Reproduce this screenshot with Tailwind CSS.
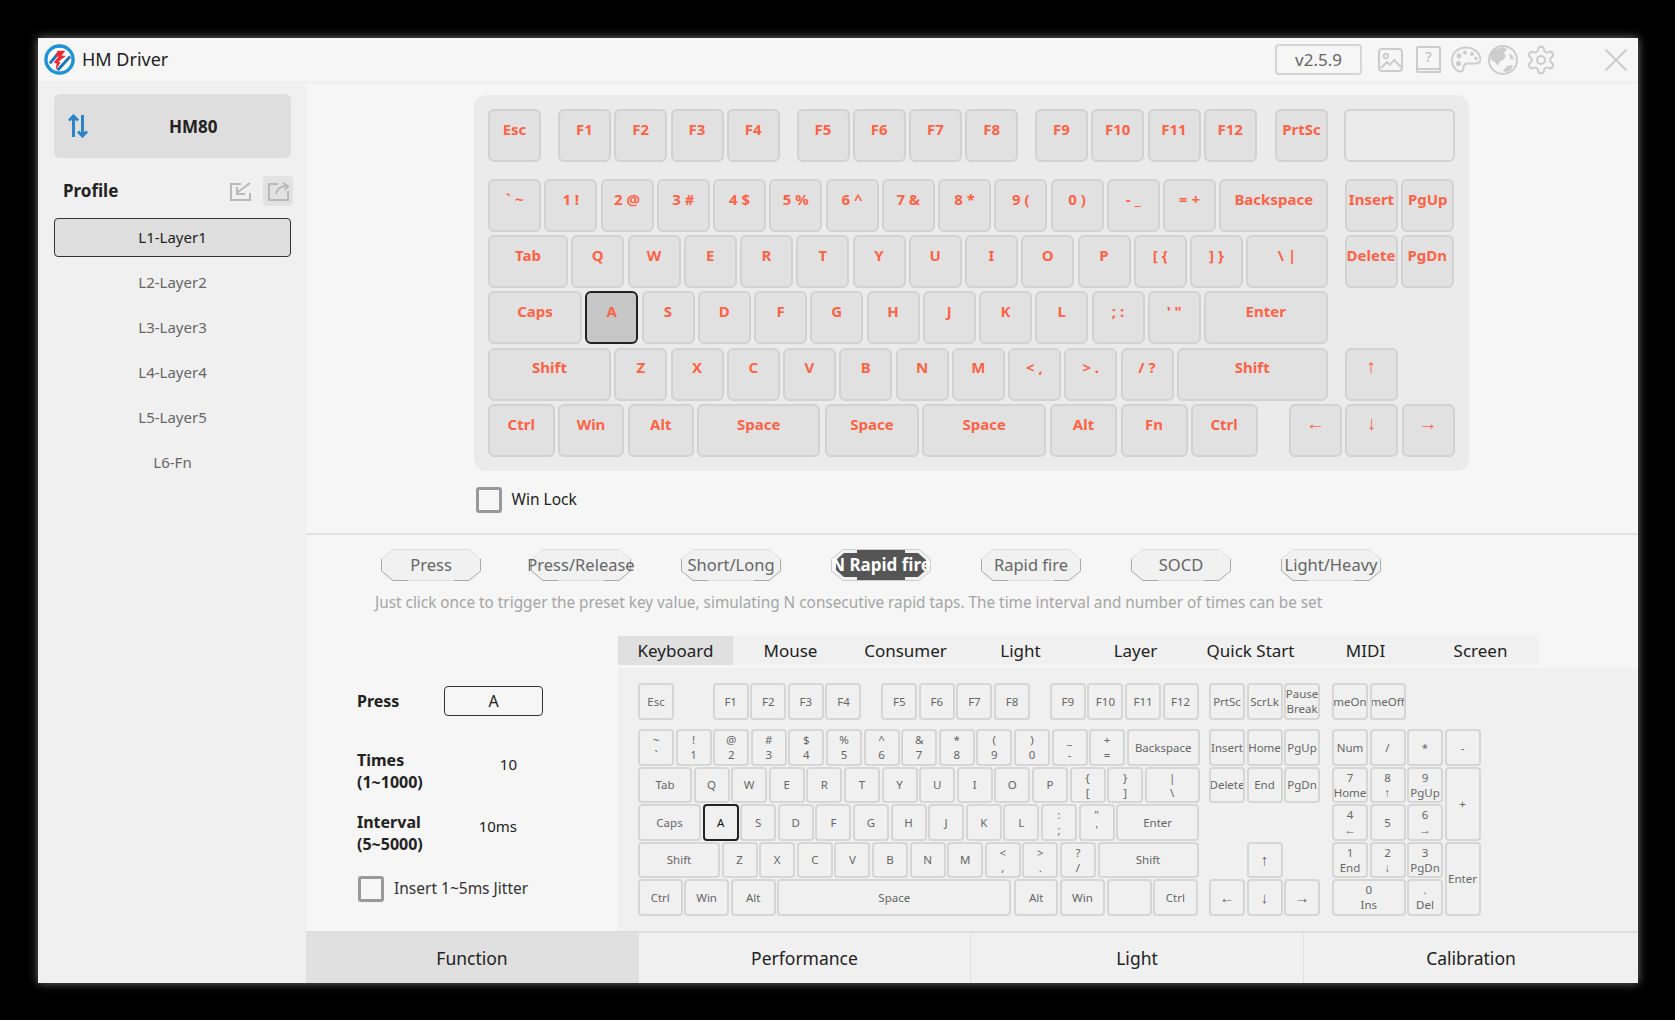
<!DOCTYPE html>
<html lang="en">
<head>
<meta charset="UTF-8" />
<title>HM Driver</title>
<script src="https://cdn.jsdelivr.net/npm/@tailwindcss/browser@4"></script>
</head>
<body class="bg-black font-['Noto_Sans',sans-serif] text-[#222] overflow-hidden">

<div class="h-[1020px] pl-[38px] pt-[38px]">
  <div class="w-[1600px] h-[945px] flex flex-col bg-[#f6f6f6] shadow-[0_0_9px_rgba(255,255,255,0.45)]">

    <!-- Title bar -->
    <div class="h-[46px] shrink-0 flex items-center border-b-[3px] border-[#f0f0f0] pr-[11px]">
      <svg class="ml-[6px] w-[31px] h-[31px]" viewBox="0 0 32 32" fill="none">
        <circle cx="16" cy="16" r="14" fill="#fff" stroke="#1b93d6" stroke-width="3.5"/>
        <path d="M6 20 L16 8 M14 27 L27 13" stroke="#1b75bb" stroke-width="3"/>
        <path d="M14 7h8l-4 5h5l-8 6 2 1-5 8 1-7-3-1 5-6h-3z" fill="#ee2b2f"/>
      </svg>
      <span class="ml-[7px] text-[18px]">HM Driver</span>
      <div class="ml-auto w-[87px] h-[31px] flex items-center justify-center rounded-[4px] border-2 border-[#d6d6d6] text-[17px] text-[#666]">v2.5.9</div>
      <svg class="ml-[16px] w-[25px] h-[24px]" viewBox="0 0 25 24" fill="none" stroke="#ccc" stroke-width="2">
        <rect x="1" y="1" width="23" height="22" rx="3"/><circle cx="8" cy="8" r="2.2"/><path d="M3 20l6-6 3 3 4-5 7 7"/>
      </svg>
      <svg class="ml-[13px] w-[25px] h-[27px]" viewBox="0 0 25 27" fill="none" stroke="#ccc" stroke-width="2">
        <path d="M1 23V2a1 1 0 0 1 1-1h21a1 1 0 0 1 1 1v24H2a1 1 0 0 1-1-1v-2h23"/>
        <text x="12.5" y="16" text-anchor="middle" font-size="15" fill="#bbb" stroke="none" font-family="Noto Sans">?</text>
      </svg>
      <svg class="ml-[10px] w-[30px] h-[27px]" viewBox="0 0 30 27" fill="none" stroke="#ccc" stroke-width="2">
        <path d="M15 1.500C7 1.500 1 7 1 14c0 6 4 11.500 8.500 11.500 3 0 3-2 3-4.500s2-3.500 4.500-3.500c4 0 12.500 1 12.500-3.500C29.500 7 23 1.500 15 1.500z"/>
        <g fill="#ccc" stroke="none"><circle cx="8" cy="10" r="2.400"/><circle cx="14" cy="6.500" r="2"/><circle cx="21" cy="8" r="2"/><circle cx="25" cy="12.500" r="1.800"/><circle cx="7.500" cy="17.500" r="2.600"/></g>
      </svg>
      <svg class="ml-[7px] w-[30px] h-[30px]" viewBox="0 0 30 30" fill="none" stroke="#ccc" stroke-width="2">
        <circle cx="15" cy="15" r="14"/>
        <path fill="#ccc" stroke="none" d="M6 5l9-3 4 2-3 4 2 3-3 4-3 1-2 5-3-4-4-2-1-6zM19 21l6-1-2 5-5 2-3-1zM21 9l3 1 2 4-3 1z"/>
      </svg>
      <svg class="ml-[7px] w-[32px] h-[32px]" viewBox="0 0 24 24" fill="none" stroke="#ccc" stroke-width="1.500">
        <path d="M12.220 2h-.44a2 2 0 0 0-2 2v.18a2 2 0 0 1-1 1.730l-.43.25a2 2 0 0 1-2 0l-.15-.08a2 2 0 0 0-2.730.73l-.22.38a2 2 0 0 0 .73 2.730l.15.1a2 2 0 0 1 1 1.720v.51a2 2 0 0 1-1 1.740l-.15.09a2 2 0 0 0-.73 2.730l.22.38a2 2 0 0 0 2.730.73l.15-.08a2 2 0 0 1 2 0l.43.25a2 2 0 0 1 1 1.730V20a2 2 0 0 0 2 2h.44a2 2 0 0 0 2-2v-.18a2 2 0 0 1 1-1.730l.43-.25a2 2 0 0 1 2 0l.15.08a2 2 0 0 0 2.730-.73l.22-.39a2 2 0 0 0-.73-2.730l-.15-.08a2 2 0 0 1-1-1.740v-.5a2 2 0 0 1 1-1.740l.15-.09a2 2 0 0 0 .73-2.730l-.22-.38a2 2 0 0 0-2.730-.73l-.15.08a2 2 0 0 1-2 0l-.43-.25a2 2 0 0 1-1-1.730V4a2 2 0 0 0-2-2z"/>
        <circle cx="12" cy="12" r="3"/>
      </svg>
      <svg class="ml-[48px] w-[22px] h-[22px]" viewBox="0 0 22 22" fill="none" stroke="#ccc" stroke-width="2"><path d="M0.500 0.500l21 21M21.500 0.500l-21 21"/></svg>
    </div>

    <div class="flex-1 flex min-h-0">
      <!-- Sidebar -->
      <div class="w-[268px] shrink-0 bg-[#f0f0f0] pt-[10px] pl-[16px]">
        <div class="w-[237px] h-[64px] rounded-[6px] bg-[#dedede] flex items-center">
          <svg class="ml-[14px] w-[20px] h-[24px]" viewBox="0 0 20 24" fill="none" stroke="#2d84c4" stroke-width="3"><path d="M5.500 23V2M1 6.500L5.500 2 10 6.500M14.500 1v21M10 17.500l4.500 4.500 4.500-4.500"/></svg>
          <span class="ml-[81px] mt-[2px] text-[17px] font-bold">HM80</span>
        </div>
        <div class="mt-[18px] w-[237px] h-[30px] flex items-center">
          <span class="ml-[9px] text-[17px] font-bold">Profile</span>
          <svg class="ml-auto w-[21px] h-[19px]" viewBox="0 0 21 19" fill="none" stroke="#b9b9b9" stroke-width="2"><path d="M11 2H1v16h19v-7M20 1L8 10M7 5v7h8"/></svg>
          <div class="ml-[12px] mr-[-2px] w-[30px] h-[30px] rounded-[4px] bg-[#e2e2e2] flex items-center justify-center">
            <svg class="w-[21px] h-[19px]" viewBox="0 0 21 19" fill="none" stroke="#b9b9b9" stroke-width="2"><path d="M10 2H1v16h19V9M8 12C9 7 13 4 19 4M15 1l5 3-3 4"/></svg>
          </div>
        </div>
        <div class="mt-[12px] w-[237px] flex flex-col gap-[6px] text-[15px] text-[#666]">
          <div class="h-[39px] flex items-center justify-center rounded-[4px] border-[1.5px] border-[#333] bg-[#dedede] text-[#222]">L1-Layer1</div>
          <div class="h-[39px] flex items-center justify-center">L2-Layer2</div>
          <div class="h-[39px] flex items-center justify-center">L3-Layer3</div>
          <div class="h-[39px] flex items-center justify-center">L4-Layer4</div>
          <div class="h-[39px] flex items-center justify-center">L5-Layer5</div>
          <div class="h-[39px] flex items-center justify-center">L6-Fn</div>
        </div>
      </div>

      <!-- Main -->
      <div class="flex-1 flex flex-col min-w-0">
        <!-- Upper keyboard -->
        <div class="h-[451px] shrink-0 border-b-2 border-[#e2e2e2] pl-[168px] pt-[11px]">
          <div class="w-[995px] h-[376px] rounded-[12px] bg-[#ebebeb] pl-[14px] pt-[14px] flex flex-col gap-[3.25px] text-[15px] font-bold text-[#ff6347] [&_button]:min-w-[53px] [&_button]:h-[53px] [&_button]:shrink-0 [&_button]:pb-[13px] [&_button]:rounded-[6px] [&_button]:border-2 [&_button]:border-[#d2d2d2] [&_button]:bg-[#e1e1e1]">
            <div class="flex gap-[3.25px] mb-[13.5px]">
              <button>Esc</button>
              <button class="ml-[13.75px]">F1</button><button>F2</button><button>F3</button><button>F4</button>
              <button class="ml-[13.5px]">F5</button><button>F6</button><button>F7</button><button>F8</button>
              <button class="ml-[13.5px]">F9</button><button>F10</button><button>F11</button><button>F12</button>
              <button class="ml-[15px]">PrtSc</button>
              <button class="ml-[12.75px] w-[111px] !bg-[#ebebeb]"></button>
            </div>
            <div class="flex gap-[3.25px]">
              <button>` ~</button><button>1 !</button><button>2 @</button><button>3 #</button><button>4 $</button><button>5 %</button><button>6 ^</button><button>7 &amp;</button><button>8 *</button><button>9 (</button><button>0 )</button><button>- _</button><button>= +</button>
              <button class="w-[109px]">Backspace</button>
              <button class="ml-[13.5px]">Insert</button><button>PgUp</button>
            </div>
            <div class="flex gap-[3.25px]">
              <button class="w-[80px]">Tab</button>
              <button>Q</button><button>W</button><button>E</button><button>R</button><button>T</button><button>Y</button><button>U</button><button>I</button><button>O</button><button>P</button><button>[ {</button><button>] }</button>
              <button class="w-[81.500px]">\ |</button>
              <button class="ml-[13.5px]">Delete</button><button>PgDn</button>
            </div>
            <div class="flex gap-[3.25px]">
              <button class="w-[94px]">Caps</button>
              <button class="!bg-[#c6c6c6] !border-[#222]">A</button>
              <button>S</button><button>D</button><button>F</button><button>G</button><button>H</button><button>J</button><button>K</button><button>L</button><button>; :</button><button>' "</button>
              <button class="w-[123.5px]">Enter</button>
            </div>
            <div class="flex gap-[3.25px]">
              <button class="w-[123px]">Shift</button>
              <button>Z</button><button>X</button><button>C</button><button>V</button><button>B</button><button>N</button><button>M</button><button>&lt; ,</button><button>&gt; .</button><button>/ ?</button>
              <button class="w-[151px]">Shift</button>
              <button class="ml-[13.75px] font-['Liberation_Sans'] text-[19px]">↑</button>
            </div>
            <div class="flex gap-[3.25px]">
              <button class="w-[66.5px]">Ctrl</button><button class="w-[66.5px]">Win</button><button class="w-[66.5px]">Alt</button>
              <button class="w-[123px]">Space</button>
              <button class="ml-[1.5px] w-[94px]">Space</button>
              <button class="w-[123.75px]">Space</button>
              <button class="ml-[0.5px] w-[67.5px]">Alt</button><button class="w-[67px]">Fn</button><button class="w-[66.75px]">Ctrl</button>
              <button class="ml-[28.25px] font-['Liberation_Sans'] text-[19px]">←</button><button class="font-['Liberation_Sans'] text-[19px]">↓</button><button class="font-['Liberation_Sans'] text-[19px]">→</button>
            </div>
          </div>
          <label class="mt-[16px] ml-[2px] flex items-center">
            <span class="w-[26px] h-[26px] rounded-[3px] border-[3px] border-[#999]"></span>
            <span class="ml-[9.500px] text-[15.5px]">Win Lock</span>
          </label>
        </div>

        <!-- Mode presets -->
        <div class="shrink-0 pt-[14px] pl-[75px] flex gap-[50px] text-[16.5px] text-[#666]">
          <div class="relative w-[100px] h-[32px] flex items-center justify-center">
            <svg class="absolute inset-0" width="100" height="32" fill="none"><path d="M12 .5H88L99.500 10V22L88 31.500H12L.5 22V10Z" fill="#f1f1f1" stroke="#ddd"/><path d="M27 31.500H12L.5 22V10M73 31.500H88L99.500 22V10" stroke="#aaa"/></svg>
            <span class="relative whitespace-nowrap">Press</span>
          </div>
          <div class="relative w-[100px] h-[32px] flex items-center justify-center">
            <svg class="absolute inset-0" width="100" height="32" fill="none"><path d="M12 .5H88L99.500 10V22L88 31.500H12L.5 22V10Z" fill="#f1f1f1" stroke="#ddd"/><path d="M27 31.500H12L.5 22V10M73 31.500H88L99.500 22V10" stroke="#aaa"/></svg>
            <span class="relative whitespace-nowrap">Press/Release</span>
          </div>
          <div class="relative w-[100px] h-[32px] flex items-center justify-center">
            <svg class="absolute inset-0" width="100" height="32" fill="none"><path d="M12 .5H88L99.500 10V22L88 31.500H12L.5 22V10Z" fill="#f1f1f1" stroke="#ddd"/><path d="M27 31.500H12L.5 22V10M73 31.500H88L99.500 22V10" stroke="#aaa"/></svg>
            <span class="relative whitespace-nowrap">Short/Long</span>
          </div>
          <div class="relative w-[100px] h-[32px] overflow-hidden flex items-center justify-center font-bold text-[17px] text-white">
            <svg class="absolute inset-0" width="100" height="32" fill="none"><path d="M12 .5H88L99.500 10V22L88 31.500H12L.5 22V10Z" fill="#f1f1f1" stroke="#ccc"/><path d="M26 1H74V4H87L95 11V21L87 28H74V31H26V28H13L5 21V11L13 4H26Z" fill="#555"/></svg>
            <span class="relative whitespace-nowrap">N Rapid fire</span>
          </div>
          <div class="relative w-[100px] h-[32px] flex items-center justify-center">
            <svg class="absolute inset-0" width="100" height="32" fill="none"><path d="M12 .5H88L99.500 10V22L88 31.500H12L.5 22V10Z" fill="#f1f1f1" stroke="#ddd"/><path d="M27 31.500H12L.5 22V10M73 31.500H88L99.500 22V10" stroke="#aaa"/></svg>
            <span class="relative whitespace-nowrap">Rapid fire</span>
          </div>
          <div class="relative w-[100px] h-[32px] flex items-center justify-center">
            <svg class="absolute inset-0" width="100" height="32" fill="none"><path d="M12 .5H88L99.500 10V22L88 31.500H12L.5 22V10Z" fill="#f1f1f1" stroke="#ddd"/><path d="M27 31.500H12L.5 22V10M73 31.500H88L99.500 22V10" stroke="#aaa"/></svg>
            <span class="relative whitespace-nowrap">SOCD</span>
          </div>
          <div class="relative w-[100px] h-[32px] flex items-center justify-center">
            <svg class="absolute inset-0" width="100" height="32" fill="none"><path d="M12 .5H88L99.500 10V22L88 31.500H12L.5 22V10Z" fill="#f1f1f1" stroke="#ddd"/><path d="M27 31.500H12L.5 22V10M73 31.500H88L99.500 22V10" stroke="#aaa"/></svg>
            <span class="relative whitespace-nowrap">Light/Heavy</span>
          </div>
        </div>
        <p class="shrink-0 mt-[9px] pl-[69px] h-[24px] leading-[24px] text-[15.33px] text-[#a5a5a5] whitespace-nowrap">Just click once to trigger the preset key value, simulating N consecutive rapid taps. The time interval and number of times can be set</p>

        <!-- Mapping area -->
        <div class="flex-1 min-h-0 mt-[21.5px] flex">
          <!-- Form -->
          <div class="w-[312px] shrink-0 pt-[50px] pl-[51px] text-[#222]">
            <div class="flex items-center h-[30px]">
              <span class="w-[87px] text-[16px] font-bold">Press</span>
              <span class="w-[99px] h-[30px] flex items-center justify-center rounded-[4px] border-[1.5px] border-[#333] text-[16px]">A</span>
            </div>
            <div class="mt-[33px] flex items-start">
              <span class="w-[87px] text-[16px] font-bold leading-[22px] whitespace-nowrap">Times<br>(1~1000)</span>
              <span class="w-[73px] pt-[4px] text-right text-[15px] leading-[22px]">10</span>
            </div>
            <div class="mt-[18px] flex items-start">
              <span class="w-[87px] text-[16px] font-bold leading-[22.5px] whitespace-nowrap">Interval<br>(5~5000)</span>
              <span class="w-[73px] pt-[4px] text-right text-[15px] leading-[22px]">10ms</span>
            </div>
            <label class="mt-[20px] ml-[1px] flex items-center">
              <span class="w-[26px] h-[26px] rounded-[3px] border-[3px] border-[#999]"></span>
              <span class="ml-[10px] pt-[1px] text-[15.5px] text-[#333]">Insert 1~5ms Jitter</span>
            </label>
          </div>

          <!-- Key picker -->
          <div class="flex-1 min-w-0 flex flex-col">
            <div class="w-[920px] h-[29px] shrink-0 bg-[#f0f0f0] flex text-[17px] text-[#222]">
              <div class="w-[115px] pt-[1px] flex items-center justify-center bg-[#e0e0e0]">Keyboard</div>
              <div class="w-[115px] pt-[1px] flex items-center justify-center">Mouse</div>
              <div class="w-[115px] pt-[1px] flex items-center justify-center">Consumer</div>
              <div class="w-[115px] pt-[1px] flex items-center justify-center">Light</div>
              <div class="w-[115px] pt-[1px] flex items-center justify-center">Layer</div>
              <div class="w-[115px] pt-[1px] flex items-center justify-center">Quick Start</div>
              <div class="w-[115px] pt-[1px] flex items-center justify-center">MIDI</div>
              <div class="w-[115px] pt-[1px] flex items-center justify-center">Screen</div>
            </div>
            <div class="flex-1 min-h-0 mt-[3px] bg-[#f0f0f0] pt-[15.5px] pl-[20px] flex text-[11.5px] leading-[15px] text-[#666] [&_button]:min-w-[36px] [&_button]:min-h-[36.5px] [&_button]:shrink-0 [&_button]:rounded-[4px] [&_button]:border-2 [&_button]:border-[#d6d6d6] [&_button]:flex [&_button]:items-center [&_button]:justify-center [&_button]:overflow-hidden [&_button]:whitespace-nowrap">
              <!-- Main block -->
              <div class="w-[562px] shrink-0 flex flex-col gap-[1px]">
                <div class="flex gap-[1.6px] mb-[8.6px]">
                  <button>Esc</button>
                  <button class="ml-[37.1px]">F1</button><button>F2</button><button>F3</button><button>F4</button>
                  <button class="ml-[18.2px]">F5</button><button>F6</button><button>F7</button><button>F8</button>
                  <button class="ml-[18.2px]">F9</button><button>F10</button><button>F11</button><button>F12</button>
                </div>
                <div class="flex gap-[1.6px]">
                  <button class="text-center">~<br>`</button><button class="text-center">!<br>1</button><button class="text-center">@<br>2</button><button class="text-center">#<br>3</button><button class="text-center">$<br>4</button><button class="text-center">%<br>5</button><button class="text-center">^<br>6</button><button class="text-center">&amp;<br>7</button><button class="text-center">*<br>8</button><button class="text-center">(<br>9</button><button class="text-center">)<br>0</button><button class="text-center">_<br>-</button><button class="text-center">+<br>=</button>
                  <button class="w-[73px]">Backspace</button>
                </div>
                <div class="flex gap-[1.6px]">
                  <button class="w-[54px]">Tab</button>
                  <button>Q</button><button>W</button><button>E</button><button>R</button><button>T</button><button>Y</button><button>U</button><button>I</button><button>O</button><button>P</button><button class="text-center">{<br>[</button><button class="text-center">}<br>]</button>
                  <button class="w-[55px] text-center">|<br>\</button>
                </div>
                <div class="flex gap-[1.6px]">
                  <button class="w-[63px]">Caps</button>
                  <button class="!border-[#222] text-[#111]">A</button>
                  <button>S</button><button>D</button><button>F</button><button>G</button><button>H</button><button>J</button><button>K</button><button>L</button><button class="text-center">:<br>;</button><button class="text-center">"<br>'</button>
                  <button class="w-[83px]">Enter</button>
                </div>
                <div class="flex gap-[1.6px]">
                  <button class="w-[82px]">Shift</button>
                  <button>Z</button><button>X</button><button>C</button><button>V</button><button>B</button><button>N</button><button>M</button><button class="text-center">&lt;<br>,</button><button class="text-center">&gt;<br>.</button><button class="text-center">?<br>/</button>
                  <button class="w-[101px]">Shift</button>
                </div>
                <div class="flex gap-[1.6px]">
                  <button class="w-[44.5px]">Ctrl</button><button class="w-[45px]">Win</button><button class="w-[45px]">Alt</button>
                  <button class="w-[234px]">Space</button>
                  <button class="ml-[1px] w-[44.5px]">Alt</button><button class="w-[45px]">Win</button><button class="w-[45px]"></button><button class="w-[44.5px]">Ctrl</button>
                </div>
              </div>
              <!-- Nav block -->
              <div class="ml-[9px] w-[112px] shrink-0 grid grid-cols-[repeat(3,36px)] grid-rows-[36.5px_7.6px_repeat(5,36.5px)] gap-x-[1.5px] gap-y-[1px] content-start">
                <button>PrtSc</button><button>ScrLk</button><button class="text-center">Pause<br>Break</button>
                <div class="col-span-3"></div>
                <button>Insert</button><button>Home</button><button>PgUp</button>
                <button>Delete</button><button>End</button><button>PgDn</button>
                <div class="col-span-3"></div>
                <button class="col-start-2 font-['Liberation_Sans'] text-[15px]">↑</button>
                <button class="col-start-1 font-['Liberation_Sans'] text-[15px]">←</button><button class="font-['Liberation_Sans'] text-[15px]">↓</button><button class="font-['Liberation_Sans'] text-[15px]">→</button>
              </div>
              <!-- Numpad -->
              <div class="ml-[11px] shrink-0 grid grid-cols-[repeat(4,36px)] grid-rows-[36.5px_7.6px_repeat(5,36.5px)] gap-x-[1.5px] gap-y-[1px] content-start">
                <button>meOn</button><button>meOff</button>
                <div class="col-span-4"></div>
                <button>Num</button><button>/</button><button>*</button><button>-</button>
                <button class="text-center">7<br>Home</button><button class="text-center">8<br>↑</button><button class="text-center">9<br>PgUp</button><button class="row-span-2">+</button>
                <button class="text-center">4<br>←</button><button>5</button><button class="text-center">6<br>→</button>
                <button class="text-center">1<br>End</button><button class="text-center">2<br>↓</button><button class="text-center">3<br>PgDn</button><button class="row-span-2">Enter</button>
                <button class="col-span-2 text-center">0<br>Ins</button><button class="text-center">.<br>Del</button>
              </div>
            </div>
          </div>
        </div>

        <!-- Bottom tabs -->
        <div class="h-[52px] shrink-0 flex border-t-2 border-[#dedede] text-[17.5px] text-[#222]">
          <div class="w-[332px] flex items-center justify-center bg-[#e0e0e0]">Function</div>
          <div class="w-[332px] flex items-center justify-center bg-[#f0f0f0] border-l border-[#e0e0e0]">Performance</div>
          <div class="w-[333px] flex items-center justify-center bg-[#f0f0f0] border-l border-[#e0e0e0]">Light</div>
          <div class="flex-1 flex items-center justify-center bg-[#f0f0f0] border-l border-[#e0e0e0]">Calibration</div>
        </div>
      </div>
    </div>
  </div>
</div>

</body>
</html>
